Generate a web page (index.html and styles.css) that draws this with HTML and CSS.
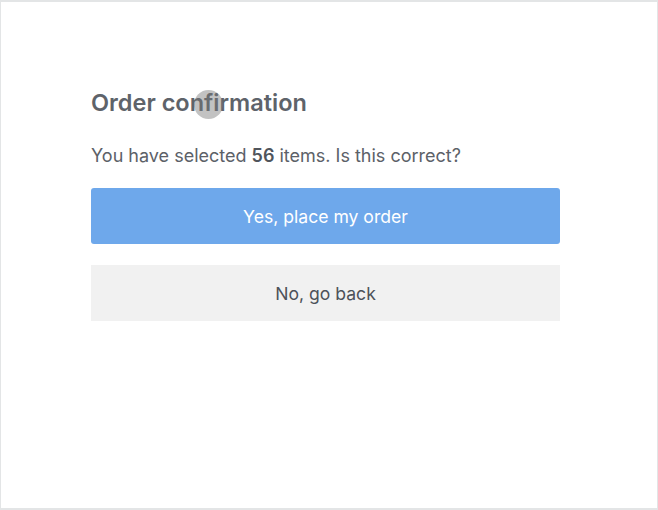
FILE: index.html
```html
<!DOCTYPE html>
<html lang="en">
<head>
    <meta charset="UTF-8">
    <meta name="viewport" content="width=device-width, initial-scale=1.0">
    <title>Order confirmation</title>
    <link rel="stylesheet" href="styles.css">
</head>
<body>
    <div class="frame">
        <div class="dialog">
            <h1 class="title">Order confirmation</h1>
            <p class="question">You have selected <strong>56</strong> items. Is this correct?</p>
            <div class="actions">
                <button class="btn btn-primary">Yes, place my order</button>
                <button class="btn btn-secondary">No, go back</button>
            </div>
        </div>
        <!-- tap indicator from the recording -->
        <div class="tap"></div>
    </div>
</body>
</html>
```

FILE: styles.css
```css
* {
    box-sizing: border-box;
}
body {
    margin: 0;
    font-family: Inter, 'Liberation Sans', Arial, sans-serif;
    background-color: #ffffff;
}
.frame {
    position: relative;
    width: 658px;
    height: 510px;
    border: 1px solid #e3e5e6;
    border-top-width: 2px;
    border-bottom-width: 2px;
    background-color: #ffffff;
}
.dialog {
    padding: 88px 97px 0 90px;
}
.title {
    margin: 0;
    font-size: 23.5px;
    font-weight: 600;
    color: #5e636a;
    line-height: 26px;
}
.question {
    margin: 29px 0 0;
    font-size: 18px;
    color: #5c6168;
    line-height: 22px;
}
.question strong {
    font-weight: 600;
    color: #50555c;
}
.actions {
    display: flex;
    flex-direction: column;
    gap: 21px;
    margin-top: 21px;
}
.btn {
    height: 56px;
    border: none;
    font-family: inherit;
    font-size: 17.6px;
    cursor: pointer;
}
.btn-primary {
    background-color: #6ea8eb;
    color: #ffffff;
    border-radius: 3px;
}
.btn-secondary {
    background-color: #f1f1f1;
    color: #4d5259;
    border-radius: 0;
}
.tap {
    position: absolute;
    left: 193px;
    top: 88px;
    width: 29px;
    height: 29px;
    border-radius: 50%;
    background-color: rgba(120, 120, 120, 0.45);
}
```
